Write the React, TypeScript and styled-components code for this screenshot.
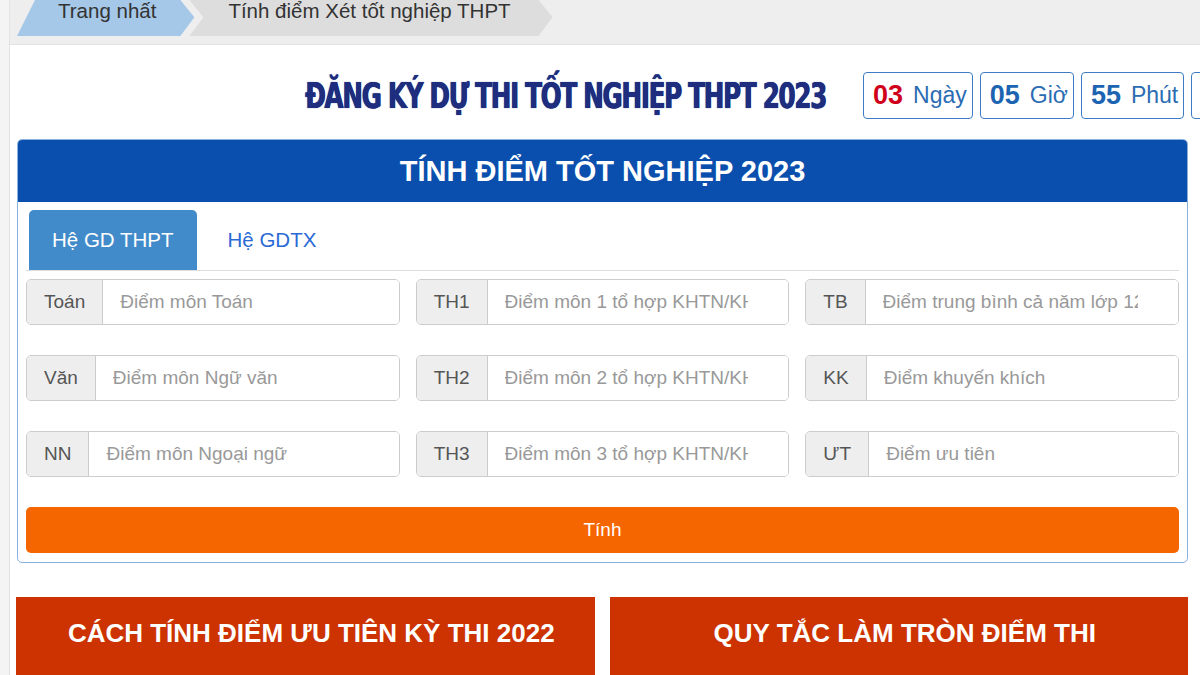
import React from 'react';
import styled, { createGlobalStyle } from 'styled-components';

const GlobalStyle = createGlobalStyle`
  html, body {
    margin: 0;
    padding: 0;
    background: #f4f4f4;
    font-family: "Liberation Sans", Arial, sans-serif;
    overflow: hidden;
  }
  * { box-sizing: border-box; }
`

const Page = styled.div`
  margin-left: 9px;
  border-left: 1px solid #e2e2e2;
  background: #ffffff;
  min-height: 100vh;
`

const Crumbs = styled.div`
  height: 45px;
  background: #eeeeee;
  border-bottom: 1px solid #e2e2e2;
  padding-left: 7px;
  display: flex;
  align-items: flex-start;
`

const Crumb = styled.a<{ first?: boolean }>`
  display: block;
  height: 36px;
  line-height: 22px;
  font-size: 20.5px;
  color: #333333;
  text-decoration: none;
  background: ${props => props.first ? '#a5c7e8' : '#dddddd'};
  padding: ${props => props.first ? '0 38px 0 41px' : '0 42px 0 39px'};
  margin-right: ${props => props.first ? '-5px' : '0'};
  clip-path: ${props => props.first
    ? 'polygon(18px 0, calc(100% - 14px) 0, 100% 48%, calc(100% - 14px) 100%, 0 100%)'
    : 'polygon(0 0, calc(100% - 14px) 0, 100% 48%, calc(100% - 14px) 100%, 0 100%, 14px 48%)'};
`

const Heading = styled.div`
  height: 94px;
  padding-top: 6px;
  display: flex;
  align-items: center;
  padding-left: 295px;
  gap: 38px;
  white-space: nowrap;
`

const Title = styled.h1`
  margin: 0;
  width: 520px;
  flex-shrink: 0;
  font-family: "DejaVu Sans Condensed", "DejaVu Sans", sans-serif;
  font-weight: 900;
  font-size: 33px;
  letter-spacing: -1.6px;
  color: #1e2d7d;
  text-shadow: 0 0 1px #1e2d7d, 0.5px 0 0 #1e2d7d;
  transform: scale(0.832, 1.06);
  transform-origin: left center;
`

const Countdown = styled.div`
  display: flex;
  gap: 7px;
`

const TimeBox = styled.div`
  height: 47px;
  border: 1px solid #3d7cc3;
  border-radius: 4px;
  padding: 0 5px 0 9px;
  display: flex;
  align-items: center;
  gap: 10px;
  color: #2b6cb3;
  font-size: 23px;
`

const Num = styled.b<{ red?: boolean }>`
  font-size: 27px;
  color: ${props => props.red ? '#d0011b' : '#1c64b2'};
`

const Panel = styled.section`
  margin: 0 12px 0 7px;
  border: 1px solid #8ab1dc;
  border-radius: 5px;
  overflow: hidden;
`

const PanelHeader = styled.h2`
  margin: 0;
  height: 62px;
  background: #0b4fae;
  color: #ffffff;
  font-size: 29px;
  font-weight: bold;
  display: flex;
  align-items: center;
  justify-content: center;
`

const PanelBody = styled.div`
  padding: 8px 8px 9px 8px;
`

const Tabs = styled.div`
  display: flex;
  border-bottom: 1px solid #dddddd;
  padding-left: 3px;
`

const Tab = styled.a<{ active?: boolean }>`
  height: 60px;
  padding: 0 23px;
  margin-right: 8px;
  display: flex;
  align-items: center;
  font-size: 20.5px;
  border-radius: 5px 5px 0 0;
  text-decoration: none;
  background: ${props => props.active ? '#428bca' : 'transparent'};
  color: ${props => props.active ? '#ffffff' : '#2b6ad6'};
`

const Fields = styled.div`
  margin-top: 8px;
  display: grid;
  grid-template-columns: repeat(3, 1fr);
  column-gap: 16px;
  row-gap: 30px;
`

const Group = styled.label`
  height: 46px;
  display: flex;
  border: 1px solid #cccccc;
  border-radius: 5px;
  overflow: hidden;
  font-size: 19px;
`

const Addon = styled.span`
  background: #eeeeee;
  border-right: 1px solid #cccccc;
  color: #555555;
  padding: 0 17px;
  display: flex;
  align-items: center;
`

const Input = styled.input`
  flex: 1;
  min-width: 0;
  border: none;
  outline: none;
  padding: 0 40px 0 17px;
  font-family: inherit;
  font-size: 19px;
  color: #555555;
  &::placeholder {
    color: #999999;
  }
`

const Submit = styled.button`
  margin-top: 30px;
  width: 100%;
  height: 46px;
  border: none;
  border-radius: 5px;
  background: #f56500;
  color: #ffffff;
  font-family: inherit;
  font-size: 19px;
`

const Links = styled.div`
  margin: 34px 12px 0 6px;
  display: grid;
  grid-template-columns: 1fr 1fr;
  gap: 15px;
`

const LinkBox = styled.a`
  height: 110px;
  background: #cc3300;
  color: #ffffff;
  font-size: 26px;
  font-weight: bold;
  text-align: center;
  padding: 21px 0 0 12px;
  text-decoration: none;
`

const fields = [
  { label: 'Toán', hint: 'Điểm môn Toán' },
  { label: 'TH1', hint: 'Điểm môn 1 tổ hợp KHTN/KHXH' },
  { label: 'TB', hint: 'Điểm trung bình cả năm lớp 12' },
  { label: 'Văn', hint: 'Điểm môn Ngữ văn' },
  { label: 'TH2', hint: 'Điểm môn 2 tổ hợp KHTN/KHXH' },
  { label: 'KK', hint: 'Điểm khuyến khích' },
  { label: 'NN', hint: 'Điểm môn Ngoại ngữ' },
  { label: 'TH3', hint: 'Điểm môn 3 tổ hợp KHTN/KHXH' },
  { label: 'ƯT', hint: 'Điểm ưu tiên' },
]

const App = () => {
  return (
    <>
      <GlobalStyle />
      <Page>
        <Crumbs>
          <Crumb first href="#">Trang nhất</Crumb>
          <Crumb href="#">Tính điểm Xét tốt nghiệp THPT</Crumb>
        </Crumbs>
        <Heading>
          <Title>ĐĂNG KÝ DỰ THI TỐT NGHIỆP THPT 2023</Title>
          <Countdown>
            <TimeBox><Num red>03</Num>Ngày</TimeBox>
            <TimeBox><Num>05</Num>Giờ</TimeBox>
            <TimeBox><Num>55</Num>Phút</TimeBox>
            <TimeBox><Num>42</Num>Giây</TimeBox>
          </Countdown>
        </Heading>
        <Panel>
          <PanelHeader>TÍNH ĐIỂM TỐT NGHIỆP 2023</PanelHeader>
          <PanelBody>
            <Tabs>
              <Tab active href="#">Hệ GD THPT</Tab>
              <Tab href="#">Hệ GDTX</Tab>
            </Tabs>
            <Fields>
              {fields.map(f => (
                <Group key={f.label}>
                  <Addon>{f.label}</Addon>
                  <Input placeholder={f.hint} />
                </Group>
              ))}
            </Fields>
            <Submit>Tính</Submit>
          </PanelBody>
        </Panel>
        <Links>
          <LinkBox href="#">CÁCH TÍNH ĐIỂM ƯU TIÊN KỲ THI 2022</LinkBox>
          <LinkBox href="#">QUY TẮC LÀM TRÒN ĐIỂM THI</LinkBox>
        </Links>
      </Page>
    </>
  )
}

export default App;
